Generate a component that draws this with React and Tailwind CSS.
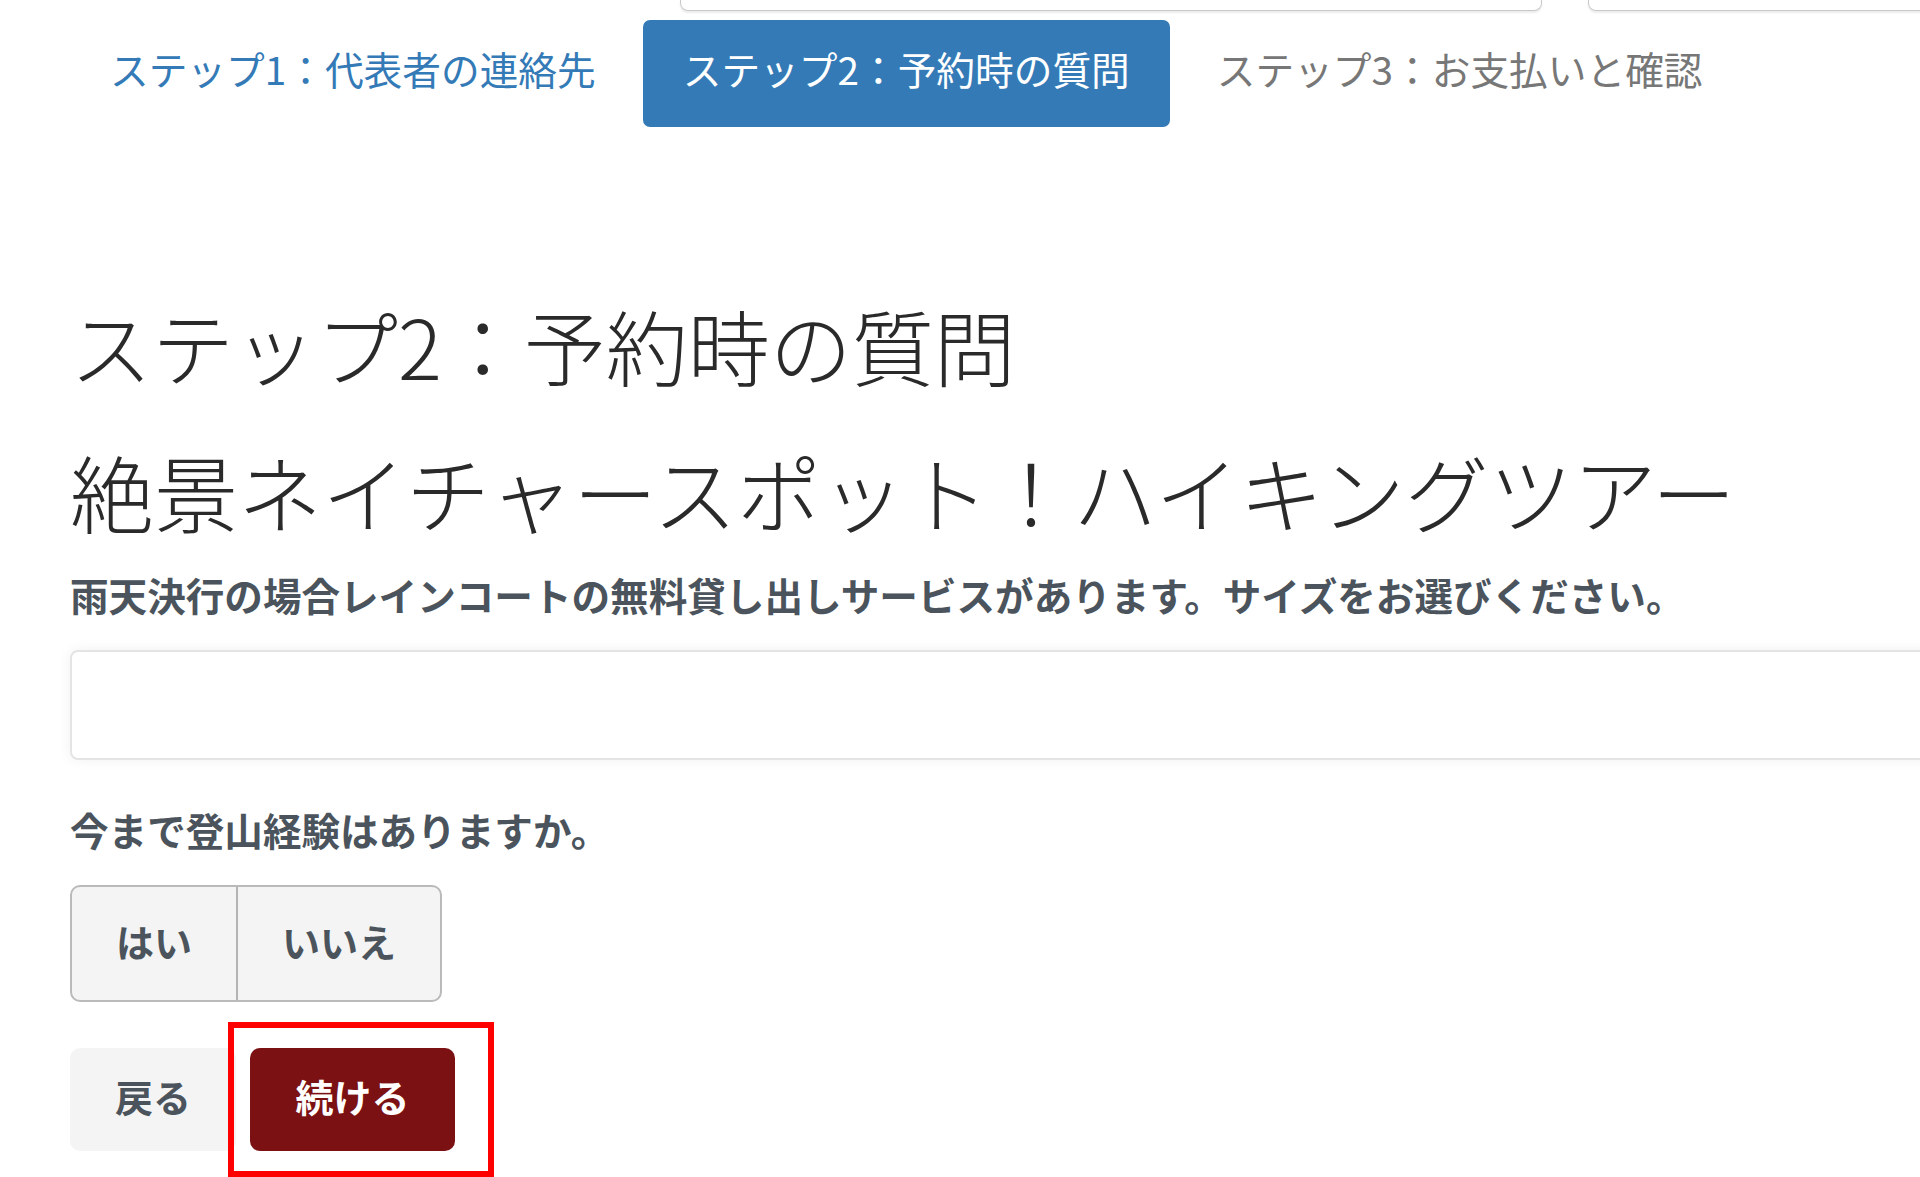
import { useState } from 'react';
import clsx from 'clsx';

const steps = [
    { id: 1, label: 'ステップ1：代表者の連絡先', state: 'done' },
    { id: 2, label: 'ステップ2：予約時の質問', state: 'active' },
    { id: 3, label: 'ステップ3：お支払いと確認', state: 'todo' },
];

function App() {
    const [climbed, setClimbed] = useState(null);

    return (
        <div className="relative h-[1177px] w-full overflow-hidden bg-white font-['Noto_Sans_CJK_JP',sans-serif]">
            {/* bottom edges of the previous form row */}
            <div className="flex h-[11px] pl-[680px]">
                <div className="w-[862px] shrink-0 rounded-b-lg border border-t-0 border-[#c8c8c8] shadow-[0_2px_2px_rgba(0,0,0,0.08)]"></div>
                <div className="ml-[46px] w-[400px] shrink-0 rounded-b-lg border border-t-0 border-[#c8c8c8] shadow-[0_2px_2px_rgba(0,0,0,0.08)]"></div>
            </div>

            <nav className="mt-[9px] flex pl-[70px]">
                {steps.map((step) => (
                    <div
                        key={step.id}
                        className={clsx(
                            'mr-[7px] h-[107px] whitespace-nowrap rounded-[7px] px-[40px] pt-[25px] text-[38.7px] leading-[46px]',
                            {
                                'text-[#337ab7]': step.state === 'done',
                                'bg-[#337ab7] text-white': step.state === 'active',
                                'text-[#777777]': step.state === 'todo',
                            }
                        )}
                    >
                        {step.label}
                    </div>
                ))}
            </nav>

            <div className="pl-[70px]">
                <h1 className="mt-[174px] whitespace-nowrap text-[82px] font-light leading-[88px] text-[#2a2a2a]">
                    ステップ2：予約時の質問
                </h1>
                <h2 className="mt-[58px] whitespace-nowrap text-[84px] font-light leading-[88px] text-[#2a2a2a]">
                    絶景ネイチャースポット！ハイキングツアー
                </h2>

                <label className="mt-[36px] block whitespace-nowrap text-[38.6px] font-bold leading-[46px] text-[#4b545c]">
                    雨天決行の場合レインコートの無料貸し出しサービスがあります。サイズをお選びください。
                </label>
                <div className="mt-[33px] h-[110px] w-[1900px] rounded-lg border-2 border-[#e4e4e4] bg-white shadow-[0_0_14px_rgba(0,0,0,0.06)]"></div>

                <label className="mt-[46px] block whitespace-nowrap text-[38.6px] font-bold leading-[46px] text-[#4b545c]">
                    今まで登山経験はありますか。
                </label>
                <div className="mt-[33px] flex h-[117px] w-[372px] overflow-hidden rounded-[10px] border-2 border-[#bababa] bg-[#f4f4f4]">
                    <button
                        type="button"
                        onClick={() => setClimbed('yes')}
                        className={clsx('w-[166px] border-r-2 border-[#b4b4b4] pb-[6px] text-[38px] font-bold text-[#4b545c]', {
                            'bg-[#e6e6e6]': climbed === 'yes',
                        })}
                    >
                        はい
                    </button>
                    <button
                        type="button"
                        onClick={() => setClimbed('no')}
                        className={clsx('flex-1 pb-[6px] text-[38px] font-bold text-[#4b545c]', {
                            'bg-[#e6e6e6]': climbed === 'no',
                        })}
                    >
                        いいえ
                    </button>
                </div>

                <div className="mt-[46px] flex gap-[14px]">
                    <button
                        type="button"
                        className="h-[103px] w-[166px] rounded-[10px] bg-[#f4f4f4] pb-[8px] text-[38px] font-bold text-[#4b545c]"
                    >
                        戻る
                    </button>
                    <button
                        type="button"
                        className="h-[103px] w-[205px] rounded-[10px] bg-[#7b1113] pb-[8px] text-[38px] font-bold text-white"
                    >
                        続ける
                    </button>
                </div>
            </div>

            {/* annotation frame */}
            <div className="absolute left-[228px] top-[1022px] h-[155px] w-[266px] border-[6px] border-[#ff0000]"></div>
        </div>
    );
}

export default App;
